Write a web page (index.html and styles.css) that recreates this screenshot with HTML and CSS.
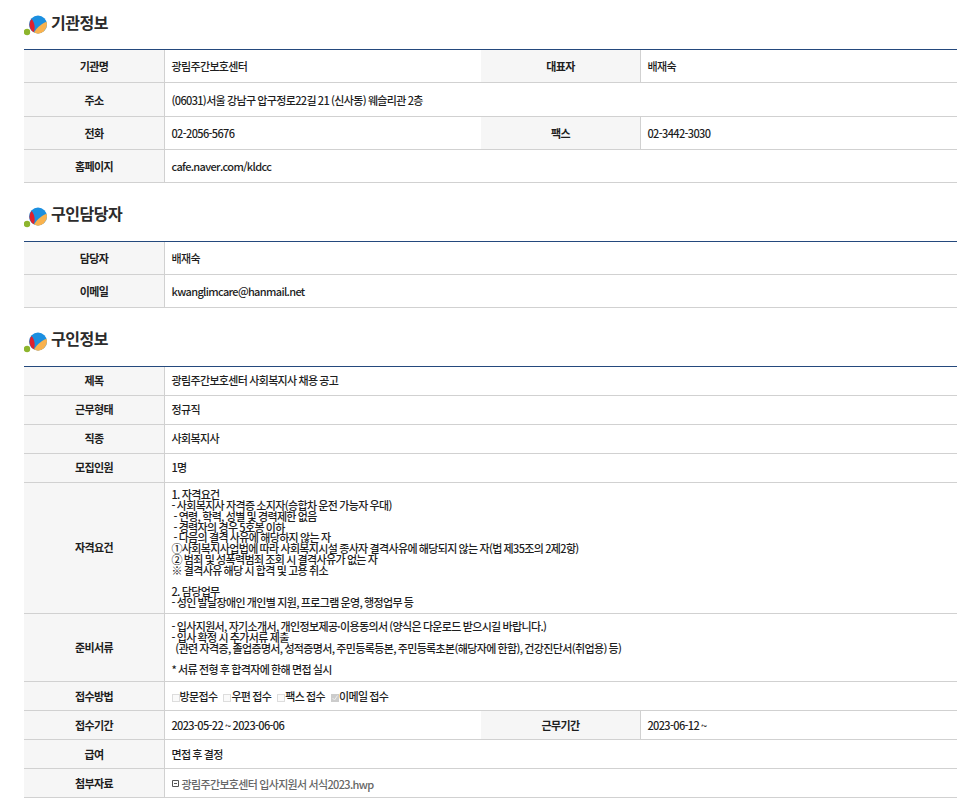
FILE: index.html
```html
<!DOCTYPE html>
<html lang="ko">
<head>
<meta charset="utf-8">
<title>채용 공고</title>
<link rel="stylesheet" href="styles.css">
</head>
<body>
<section class="sec sec-first">
<h2 class="title"><svg class="logo" viewBox="0 0 24 21" width="24" height="21"><circle cx="3" cy="17" r="3.200" fill="#8db52d"/><circle cx="14" cy="9.500" r="9" fill="#1b8fe0"/><path d="M7.500 4 A9 9 0 0 0 9.500 17.300 C11.500 14 11 8 7.500 4Z" fill="#e0202c"/><path d="M22.500 6.800 A9 9 0 0 1 10 17.600 C12 14 16 9.500 22.500 6.800Z" fill="#f9b24e"/></svg>기관정보</h2>
<table class="tbl">
<colgroup><col class="c1"><col class="c2"><col class="c3"><col></colgroup>
<tr class="r33"><th>기관명</th><td>광림주간보호센터</td><th class="th2">대표자</th><td>배재숙</td></tr>
<tr class="r34"><th>주소</th><td colspan="3">(06031)서울 강남구 압구정로22길 21 (신사동) 웨슬리관 2층</td></tr>
<tr class="r33"><th>전화</th><td>02-2056-5676</td><th class="th2">팩스</th><td>02-3442-3030</td></tr>
<tr class="r33"><th>홈페이지</th><td colspan="3">cafe.naver.com/kldcc</td></tr>
</table>
</section>
<section class="sec">
<h2 class="title"><svg class="logo" viewBox="0 0 24 21" width="24" height="21"><circle cx="3" cy="17" r="3.200" fill="#8db52d"/><circle cx="14" cy="9.500" r="9" fill="#1b8fe0"/><path d="M7.500 4 A9 9 0 0 0 9.500 17.300 C11.500 14 11 8 7.500 4Z" fill="#e0202c"/><path d="M22.500 6.800 A9 9 0 0 1 10 17.600 C12 14 16 9.500 22.500 6.800Z" fill="#f9b24e"/></svg>구인담당자</h2>
<table class="tbl">
<colgroup><col class="c1"><col></colgroup>
<tr class="r33"><th>담당자</th><td>배재숙</td></tr>
<tr class="r33"><th>이메일</th><td>kwanglimcare@hanmail.net</td></tr>
</table>
</section>
<section class="sec">
<h2 class="title"><svg class="logo" viewBox="0 0 24 21" width="24" height="21"><circle cx="3" cy="17" r="3.200" fill="#8db52d"/><circle cx="14" cy="9.500" r="9" fill="#1b8fe0"/><path d="M7.500 4 A9 9 0 0 0 9.500 17.300 C11.500 14 11 8 7.500 4Z" fill="#e0202c"/><path d="M22.500 6.800 A9 9 0 0 1 10 17.600 C12 14 16 9.500 22.500 6.800Z" fill="#f9b24e"/></svg>구인정보</h2>
<table class="tbl">
<colgroup><col class="c1"><col class="c2"><col class="c3"><col></colgroup>
<tr class="r29 up"><th>제목</th><td colspan="3">광림주간보호센터 사회복지사 채용 공고</td></tr>
<tr class="r29 up"><th>근무형태</th><td colspan="3">정규직</td></tr>
<tr class="r29 up"><th>직종</th><td colspan="3">사회복지사</td></tr>
<tr class="r29 up"><th>모집인원</th><td colspan="3">1명</td></tr>
<tr class="tall1"><th class="thup">자격요건</th><td colspan="3" class="multi">1. 자격요건<br>- 사회복지사 자격증 소지자(승합차 운전 가능자 우대)<br>&nbsp;- 연령, 학력, 성별 및 경력제한 없음<br>&nbsp;- 경력자의 경우 5호봉 이하<br>&nbsp;- 다음의 결격 사유에 해당하지 않는 자<br>①사회복지사업법에 따라 사회복지시설 종사자 결격사유에 해당되지 않는 자(법 제35조의 2제2항)<br>② 범죄 및 성폭력범죄 조회 시 결격사유가 없는 자<br>※ 결격사유 해당 시 합격 및 고용 취소<br><br>2. 담당업무<br>- 성인 발달장애인 개인별 지원, 프로그램 운영, 행정업무 등</td></tr>
<tr class="tall2"><th class="thup">준비서류</th><td colspan="3" class="multi">- 입사지원서, 자기소개서, 개인정보제공·이용동의서 (양식은 다운로드 받으시길 바랍니다.)<br>- 입사 확정 시 추가서류 제출<br>&nbsp; (관련 자격증, 졸업증명서, 성적증명서, 주민등록등본, 주민등록초본(해당자에 한함), 건강진단서(취업용) 등)<br><br>* 서류 전형 후 합격자에 한해 면접 실시</td></tr>
<tr class="r29"><th>접수방법</th><td colspan="3"><span class="opt"><span class="box"></span>방문접수</span><span class="opt"><span class="box"></span>우편 접수</span><span class="opt"><span class="box"></span>팩스 접수</span><span class="opt"><span class="box on"><svg class="chk" viewBox="0 0 8 8" width="8" height="8"><path d="M1.500 4l2 2 3-4.500" fill="none" stroke="#eee" stroke-width="1"/></svg></span>이메일 접수</span></td></tr>
<tr class="r29"><th>접수기간</th><td>2023-05-22 ~ 2023-06-06</td><th class="th2">근무기간</th><td>2023-06-12 ~</td></tr>
<tr class="r29"><th>급여</th><td colspan="3">면접 후 결정</td></tr>
<tr class="r29"><th>첨부자료</th><td colspan="3"><span class="file"><svg class="fico" viewBox="0 0 7 7" width="7" height="7"><path d="M.5 .5h6v6h-6zM2 3.500h3" fill="none" stroke="#555" stroke-width="1"/></svg>광림주간보호센터 입사지원서 서식2023.hwp</span></td></tr>
</table>
</section>
</body>
</html>
```
FILE: styles.css
```css
* { box-sizing: border-box; }
html, body { margin: 0; padding: 0; background: #fff; }
body {
  padding: 0 17px 0 24px;
  font-family: "Noto Sans CJK KR", "Noto Sans", sans-serif;
  font-size: 11px;
  color: #1e1e1e;
  height: 801px;
  overflow: hidden;
}
.title {
  display: flex;
  align-items: flex-start;
  height: 58px;
  margin: 0;
  padding-top: 19px;
  font-size: 16px;
  font-weight: 700;
  color: #2b2b2b;
  letter-spacing: -0.5px;
  line-height: 22px;
}
.sec-first .title { height: 49px; padding-top: 11px; }
.logo { margin-right: 3px; margin-top: 5px; flex: none; }
.sec-first .logo { margin-top: 4px; }
.tbl { width: 933px; border-collapse: separate; border-spacing: 0; table-layout: fixed; border-top: 1px solid #24497d; }
.c1 { width: 141px; }
.c2 { width: 316px; }
.c3 { width: 160px; }
.tbl th, .tbl td { border-bottom: 1px solid #d1d1d1; padding: 0; font-size: 11px; letter-spacing: -0.65px; word-spacing: -0.5px; line-height: 12px; }
.tbl th { background: #f6f6f6; font-weight: 700; border-right: 1px solid #d1d1d1; text-align: center; }
.tbl td { padding-left: 6.500px; font-weight: 500; color: #1e1e1e; }
.r33 { height: 33px; }
.r34 { height: 34px; }
.r29 { height: 29px; }
.tall1 { height: 131px; }
.tall2 { height: 68px; }
.tbl .up th, .tbl .up td, .tbl th.thup { padding-bottom: 2px; }
.tbl td.multi { line-height: 10.800px; padding-top: 1px; }
.opt { margin-right: 6px; }
.box { display: inline-block; width: 8px; height: 8px; border: 1px solid #ddd; background: #fafafa; vertical-align: -1px; position: relative; }
.box.on { background: #ccc; border-color: #ccc; }
.chk { position: absolute; left: -1px; top: -1px; }
.file { color: #666; display: inline-flex; align-items: center; }
.fico { margin-right: 3px; }
```
